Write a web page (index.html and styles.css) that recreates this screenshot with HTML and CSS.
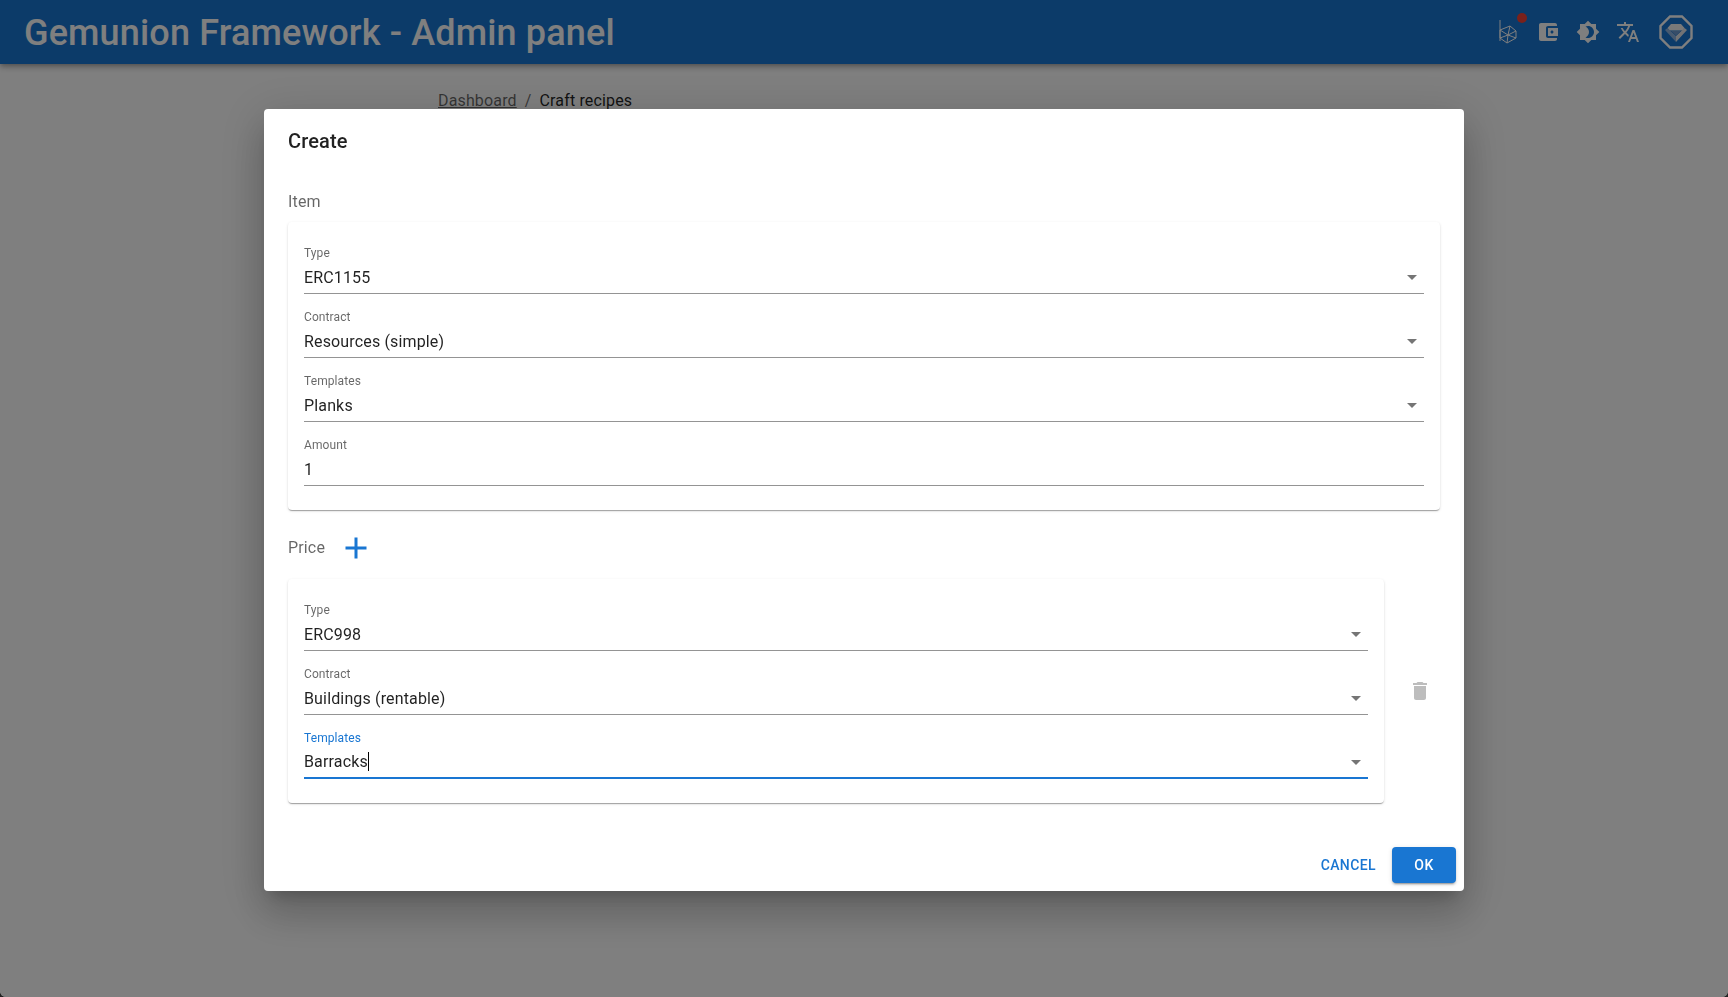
FILE: index.html
```html
<!DOCTYPE html>
<html lang="en">
<head>
    <meta charset="UTF-8">
    <title>Gemunion Framework - Admin panel</title>
    <link rel="stylesheet" href="styles.css">
</head>
<body>

    <header class="app-bar">
        <h1 class="app-title">Gemunion Framework - Admin panel</h1>
        <div class="app-icons">
            <span class="network">
                <svg class="network-icon" viewBox="0 0 20 26" fill="none" stroke="currentColor" stroke-width="1">
                    <path d="M2 1v21M2 11l10-4 6 5v7l-9 5-7-5zM2 11l8 5 8-4M10 16l-1 8M12 7l-2 9-8 3M10 16l8 3"/>
                </svg>
                <span class="network-dot"></span>
            </span>
            <svg class="wallet-icon" viewBox="0 0 24 24"><path fill="currentColor" d="M21 18v1c0 1.1-.9 2-2 2H5c-1.11 0-2-.9-2-2V5c0-1.1.89-2 2-2h14c1.1 0 2 .9 2 2v1h-9c-1.11 0-2 .9-2 2v8c0 1.1.89 2 2 2h9zm-9-2h10V8H12v8zm4-2.5c-.83 0-1.5-.67-1.5-1.5s.67-1.5 1.5-1.5 1.5.67 1.5 1.5-.67 1.5-1.5 1.5z"/></svg>
            <svg class="theme-icon" viewBox="0 0 24 24"><path fill="currentColor" d="M20 8.69V4h-4.69L12 .69 8.69 4H4v4.69L.69 12 4 15.31V20h4.69L12 23.31 15.31 20H20v-4.69L23.31 12 20 8.69zM12 18c-.89 0-1.74-.2-2.5-.55C11.56 16.5 13 14.42 13 12s-1.44-4.5-3.5-5.45C10.26 6.2 11.11 6 12 6c3.31 0 6 2.69 6 6s-2.69 6-6 6z"/></svg>
            <svg class="lang-icon" viewBox="0 0 24 24"><path fill="currentColor" d="m12.87 15.07-2.54-2.51.03-.03c1.74-1.94 2.98-4.17 3.71-6.53H17V4h-7V2H8v2H1v1.99h11.17C11.5 7.92 10.44 9.75 9 11.35 8.07 10.32 7.3 9.19 6.69 8h-2c.73 1.63 1.73 3.17 2.98 4.56l-5.09 5.02L4 19l5-5 3.11 3.11.76-2.04zM18.5 10h-2L12 22h2l1.12-3h4.75L21 22h2l-4.5-12zm-2.62 7 1.62-4.33L19.12 17h-3.24z"/></svg>
            <svg class="logo-icon" viewBox="0 0 34 34">
                <path d="M11 1.500h12L32.500 11v12L23 32.500H11L1.500 23V11z" fill="none" stroke="#fff" stroke-width="2.400"/>
                <path d="M12 9h10l3.500 4-2 2.500H10.500L8.500 13z" fill="#f2f2f2"/>
                <path d="M6 15l11 12V21l-7-6.500-1.500-1.500z" fill="#8fb4e0"/>
                <path d="M28 15L17 27V21l7-6.500 1.500-1.500z" fill="#e4e6ea"/>
                <path d="M12 16h10l-5 4.500z" fill="#6f9bd0"/>
            </svg>
        </div>
    </header>

    <nav class="breadcrumbs">
        <a href="#" class="crumb-link">Dashboard</a>
        <span class="crumb-sep">/</span>
        <span class="crumb-current">Craft recipes</span>
    </nav>

    <div class="backdrop">
        <div class="dialog">
            <h2 class="dialog-title">Create</h2>

            <div class="dialog-content">
                <div class="section-label">Item</div>
                <div class="card">
                    <div class="field">
                        <label class="field-label">Type</label>
                        <div class="field-input">ERC1155<svg class="arrow" viewBox="0 0 24 24"><path d="M7 10l5 5 5-5z"/></svg></div>
                    </div>
                    <div class="field">
                        <label class="field-label">Contract</label>
                        <div class="field-input">Resources (simple)<svg class="arrow" viewBox="0 0 24 24"><path d="M7 10l5 5 5-5z"/></svg></div>
                    </div>
                    <div class="field">
                        <label class="field-label">Templates</label>
                        <div class="field-input">Planks<svg class="arrow" viewBox="0 0 24 24"><path d="M7 10l5 5 5-5z"/></svg></div>
                    </div>
                    <div class="field">
                        <label class="field-label">Amount</label>
                        <div class="field-input">1</div>
                    </div>
                </div>

                <div class="section-label price-label">
                    Price
                    <svg class="add-icon" viewBox="0 0 24 24"><path d="M19 13h-6v6h-2v-6H5v-2h6V5h2v6h6v2z"/></svg>
                </div>
                <div class="price-row">
                    <div class="card price-card">
                        <div class="field">
                            <label class="field-label">Type</label>
                            <div class="field-input">ERC998<svg class="arrow" viewBox="0 0 24 24"><path d="M7 10l5 5 5-5z"/></svg></div>
                        </div>
                        <div class="field">
                            <label class="field-label">Contract</label>
                            <div class="field-input">Buildings (rentable)<svg class="arrow" viewBox="0 0 24 24"><path d="M7 10l5 5 5-5z"/></svg></div>
                        </div>
                        <div class="field focused">
                            <label class="field-label">Templates</label>
                            <div class="field-input"><span class="caret">Barracks</span><svg class="arrow" viewBox="0 0 24 24"><path d="M7 10l5 5 5-5z"/></svg></div>
                        </div>
                    </div>
                    <div class="delete-btn">
                        <svg class="delete-icon" viewBox="0 0 24 24"><path d="M6 19c0 1.1.9 2 2 2h8c1.1 0 2-.9 2-2V7H6v12zM19 4h-3.500l-1-1h-5l-1 1H5v2h14V4z"/></svg>
                    </div>
                </div>
            </div>

            <div class="dialog-actions">
                <button class="btn btn-text">Cancel</button>
                <button class="btn btn-primary">OK</button>
            </div>
        </div>
    </div>

</body>
</html>
```

FILE: styles.css
```css
* {
    box-sizing: border-box;
}

html {
    height: 100%;
    background-color: #222;
}

body {
    height: 100%;
    margin: 0;
    font-family: Roboto, "Liberation Sans", sans-serif;
    background-color: #fff;
    color: rgba(0, 0, 0, 0.87);
    border-radius: 0 0 6px 6px;
    overflow: hidden;
}

/* app bar */
.app-bar {
    display: flex;
    align-items: center;
    justify-content: space-between;
    height: 64px;
    padding: 0 24px;
    background-color: #1976d2;
    color: #fff;
    box-shadow: 0 2px 4px -1px rgba(0, 0, 0, 0.2), 0 4px 5px 0 rgba(0, 0, 0, 0.14), 0 1px 10px 0 rgba(0, 0, 0, 0.12);
}

.app-title {
    margin: 3px 0 0;
    font-size: 36px;
    font-weight: 500;
    line-height: 1.2;
    letter-spacing: 0.15px;
}

.app-icons {
    display: flex;
    align-items: center;
}

.network {
    position: relative;
    display: block;
    width: 20px;
    height: 26px;
    margin-right: 18px;
}

.network-icon {
    display: block;
    width: 20px;
    height: 26px;
}

.network-dot {
    position: absolute;
    top: -6px;
    left: 19px;
    width: 10px;
    height: 10px;
    border-radius: 50%;
    background-color: #f44336;
}

.wallet-icon, .theme-icon {
    width: 24px;
    height: 24px;
    margin-right: 16px;
}

.lang-icon {
    width: 24px;
    height: 24px;
    margin-right: 19px;
}

.logo-icon {
    width: 34px;
    height: 34px;
    margin-right: 11px;
}

/* breadcrumbs */
.breadcrumbs {
    display: flex;
    gap: 8px;
    padding: 25px 0 0 438px;
    font-size: 16px;
    line-height: 24px;
    letter-spacing: 0.15px;
}

.crumb-link {
    color: rgba(0, 0, 0, 0.6);
}

.crumb-sep {
    color: rgba(0, 0, 0, 0.6);
}

/* dialog */
.backdrop {
    position: fixed;
    top: 0;
    right: 0;
    bottom: 0;
    left: 0;
    display: flex;
    justify-content: center;
    align-items: flex-start;
    padding-top: 109px;
    background-color: rgba(0, 0, 0, 0.5);
    border-radius: 0 0 6px 6px;
}

.dialog {
    width: 1200px;
    background-color: #fff;
    border-radius: 4px;
    box-shadow: 0 11px 15px -7px rgba(0, 0, 0, 0.2), 0 24px 38px 3px rgba(0, 0, 0, 0.14), 0 9px 46px 8px rgba(0, 0, 0, 0.12);
}

.dialog-title {
    margin: 0;
    padding: 16px 24px;
    font-size: 20px;
    font-weight: 500;
    line-height: 33px;
    letter-spacing: 0.15px;
}

.dialog-content {
    padding: 16px 24px 36px;
}

.section-label {
    font-size: 16px;
    line-height: 24px;
    letter-spacing: 0.15px;
    color: rgba(0, 0, 0, 0.6);
    margin-bottom: 7.500px;
}

.price-label {
    display: flex;
    align-items: center;
    height: 36px;
    margin-top: 20.500px;
    margin-bottom: 12.500px;
}

.add-icon {
    width: 36px;
    height: 36px;
    margin-left: 12.500px;
    fill: #1976d2;
}

.card {
    padding: 16px;
    background-color: #fff;
    border-radius: 4px;
    box-shadow: 0 2px 1px -1px rgba(0, 0, 0, 0.2), 0 1px 1px 0 rgba(0, 0, 0, 0.14), 0 1px 3px 0 rgba(0, 0, 0, 0.12);
}

.field {
    height: 64px;
    padding: 8px 0;
}

.field-label {
    display: block;
    height: 16px;
    font-size: 12px;
    line-height: 14px;
    letter-spacing: 0.1px;
    color: rgba(0, 0, 0, 0.6);
}

.field-input {
    display: flex;
    align-items: center;
    justify-content: space-between;
    height: 32px;
    font-size: 16px;
    letter-spacing: 0.15px;
    border-bottom: 1px solid rgba(0, 0, 0, 0.42);
}

.arrow {
    width: 24px;
    height: 24px;
    fill: rgba(0, 0, 0, 0.54);
}

.focused .field-label {
    color: #1976d2;
}

.focused .field-input {
    border-bottom: 2px solid #1976d2;
}

.caret {
    border-right: 1px solid #000;
}

.price-row {
    display: flex;
    align-items: center;
}

.price-card {
    flex: 1;
}

.delete-btn {
    display: flex;
    padding: 8px;
    margin-left: 16px;
}

.delete-icon {
    width: 24px;
    height: 24px;
    fill: rgba(0, 0, 0, 0.26);
}

.dialog-actions {
    display: flex;
    justify-content: flex-end;
    gap: 8px;
    padding: 8px;
}

.btn {
    min-width: 64px;
    height: 36px;
    border: 0;
    border-radius: 4px;
    font-family: inherit;
    font-size: 14px;
    font-weight: 500;
    letter-spacing: 0.4px;
    text-transform: uppercase;
}

.btn-text {
    padding: 6px 8px;
    background: transparent;
    color: #1976d2;
}

.btn-primary {
    padding: 6px 16px;
    background-color: #1976d2;
    color: #fff;
    box-shadow: 0 3px 1px -2px rgba(0, 0, 0, 0.2), 0 2px 2px 0 rgba(0, 0, 0, 0.14), 0 1px 5px 0 rgba(0, 0, 0, 0.12);
}
```
